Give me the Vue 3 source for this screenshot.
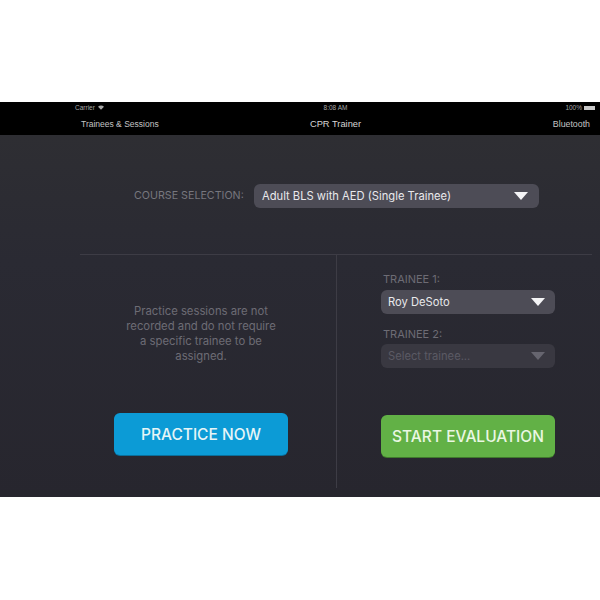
<script setup>
const message = 'Practice sessions are not recorded and do not require a specific trainee to be assigned.'
</script>

<template>
  <div class="page">
    <div class="screen">
      <header class="top">
        <div class="status">
          <span class="carrier">
            Carrier
            <svg class="wifi" width="6" height="5" viewBox="0 0 14 10">
              <path d="M0 3.2C4 -.6 10 -.6 14 3.2L7 10Z" fill="#a8a8a8" />
            </svg>
          </span>
          <span class="clock">8:08 AM</span>
          <span class="battery">
            100%
            <i class="cell"></i>
          </span>
        </div>
        <nav class="nav">
          <span class="left">Trainees &amp; Sessions</span>
          <span class="title">CPR Trainer</span>
          <span class="right">Bluetooth</span>
        </nav>
      </header>

      <main class="body">
        <div class="course">
          <span class="course-label">COURSE SELECTION:</span>
          <div class="select wide">
            <span>Adult BLS with AED (Single Trainee)</span>
            <i class="arrow"></i>
          </div>
        </div>

        <div class="panels">
          <section class="practice">
            <p class="note">{{ message }}</p>
            <button class="action blue">PRACTICE NOW</button>
          </section>
          <section class="evaluate">
            <label class="field-label">TRAINEE 1:</label>
            <div class="select small">
              <span>Roy DeSoto</span>
              <i class="arrow"></i>
            </div>
            <label class="field-label second">TRAINEE 2:</label>
            <div class="select small disabled">
              <span>Select trainee...</span>
              <i class="arrow"></i>
            </div>
            <button class="action green">START EVALUATION</button>
          </section>
        </div>
      </main>
    </div>
  </div>
</template>

<style scoped>
.page {
  width: 600px;
  height: 600px;
  padding-top: 102px;
  box-sizing: border-box;
  background: #fff;
  font-family: Inter, "Liberation Sans", sans-serif;
  overflow: hidden;
}
.screen {
  height: 395px;
  display: flex;
  flex-direction: column;
}
.top {
  height: 33px;
  flex: none;
  background: #000;
  color: #c4c4c4;
  font-family: "Liberation Sans", Arial, sans-serif;
  box-sizing: border-box;
}
.status {
  height: 11px;
  padding: 0 4px 0 75px;
  display: grid;
  grid-template-columns: 1fr auto 1fr;
  align-items: center;
  font-size: 6.5px;
  line-height: 11px;
  color: #a8a8a8;
}
.carrier { display: flex; align-items: center; gap: 3px; }
.battery { justify-self: end; display: flex; align-items: center; gap: 2px; }
.cell {
  width: 11px;
  height: 4px;
  background: #c8c8c8;
  margin-right: 1px;
}
.nav {
  display: grid;
  grid-template-columns: 1fr auto 1fr;
  align-items: center;
  height: 22px;
  padding: 0 10px 0 81px;
  font-size: 8.8px;
}
.nav .left { font-size: 8.5px; }
.nav .title { color: #d6d6d6; font-size: 9.3px; }
.nav .right { justify-self: end; }
.body {
  flex: 1;
  min-height: 0;
  background: linear-gradient(#2e2e33 0, #2a2a33 35%, #27262e 100%);
  display: flex;
  flex-direction: column;
}
.course {
  height: 119px;
  box-sizing: border-box;
  padding: 49px 0 0 134px;
  display: flex;
  align-items: flex-start;
  gap: 10px;
}
.course-label {
  font-size: 10.7px;
  line-height: 24px;
  width: 110px;
  white-space: nowrap;
  color: #77777e;
}
.select {
  display: flex;
  align-items: center;
  justify-content: space-between;
  box-sizing: border-box;
  border-radius: 6px;
  background: #4d4c56;
  color: #e9e9ec;
  font-size: 11.2px;
  height: 24px;
  padding: 0 11px 0 8px;
}
.select.wide { width: 285px; }
.select.small { width: 174px; padding-right: 10px; padding-left: 7px; }
.arrow {
  width: 0;
  height: 0;
  border-left: 7px solid transparent;
  border-right: 7px solid transparent;
  border-top: 8px solid #f4f4f6;
}
.select.disabled {
  background: #393841;
  color: #5b5a64;
}
.select.disabled .arrow { border-top-color: #66656f; }
.panels {
  flex: 1;
  min-height: 0;
  margin: 0 8px 9px 80px;
  display: grid;
  grid-template-columns: 256px 1fr;
  background: linear-gradient(#3d3c45, #3d3c45) top / 100% 1px no-repeat;
}
.practice {
  padding: 50px 0 0 34px;
  display: flex;
  flex-direction: column;
  box-sizing: border-box;
}
.note {
  margin: 0;
  width: 158px;
  margin-left: 8px;
  text-align: center;
  font-size: 11.3px;
  line-height: 15px;
  color: #6d6c75;
}
.action {
  border: 0;
  width: 174px;
  border-radius: 6px;
  color: #e6f5f6;
  font-family: Inter, "Liberation Sans", sans-serif;
  font-size: 15.5px;
  font-weight: 500;
  padding: 0;
  white-space: nowrap;
}
.blue {
  margin-top: 49px;
  height: 42px;
  background: #0c9bd6;
  box-shadow: 0 1px 0 #0a6f9b;
}
.green {
  margin-top: 47px;
  height: 42px;
  background: #62b146;
  color: #eaf7e3;
  box-shadow: 0 1px 0 #3f7a2c;
}
.evaluate {
  border-left: 1px solid #3d3c45;
  padding: 18px 0 0 44px;
  display: flex;
  flex-direction: column;
  align-items: flex-start;
}
.field-label {
  font-size: 11px;
  line-height: 15px;
  height: 15px;
  color: #6d6c75;
  margin: 0 0 3px 2px;
}
.second { margin-top: 13px; margin-bottom: 2px; }
</style>

<style>
html, body { margin: 0; background: #fff; }
</style>
